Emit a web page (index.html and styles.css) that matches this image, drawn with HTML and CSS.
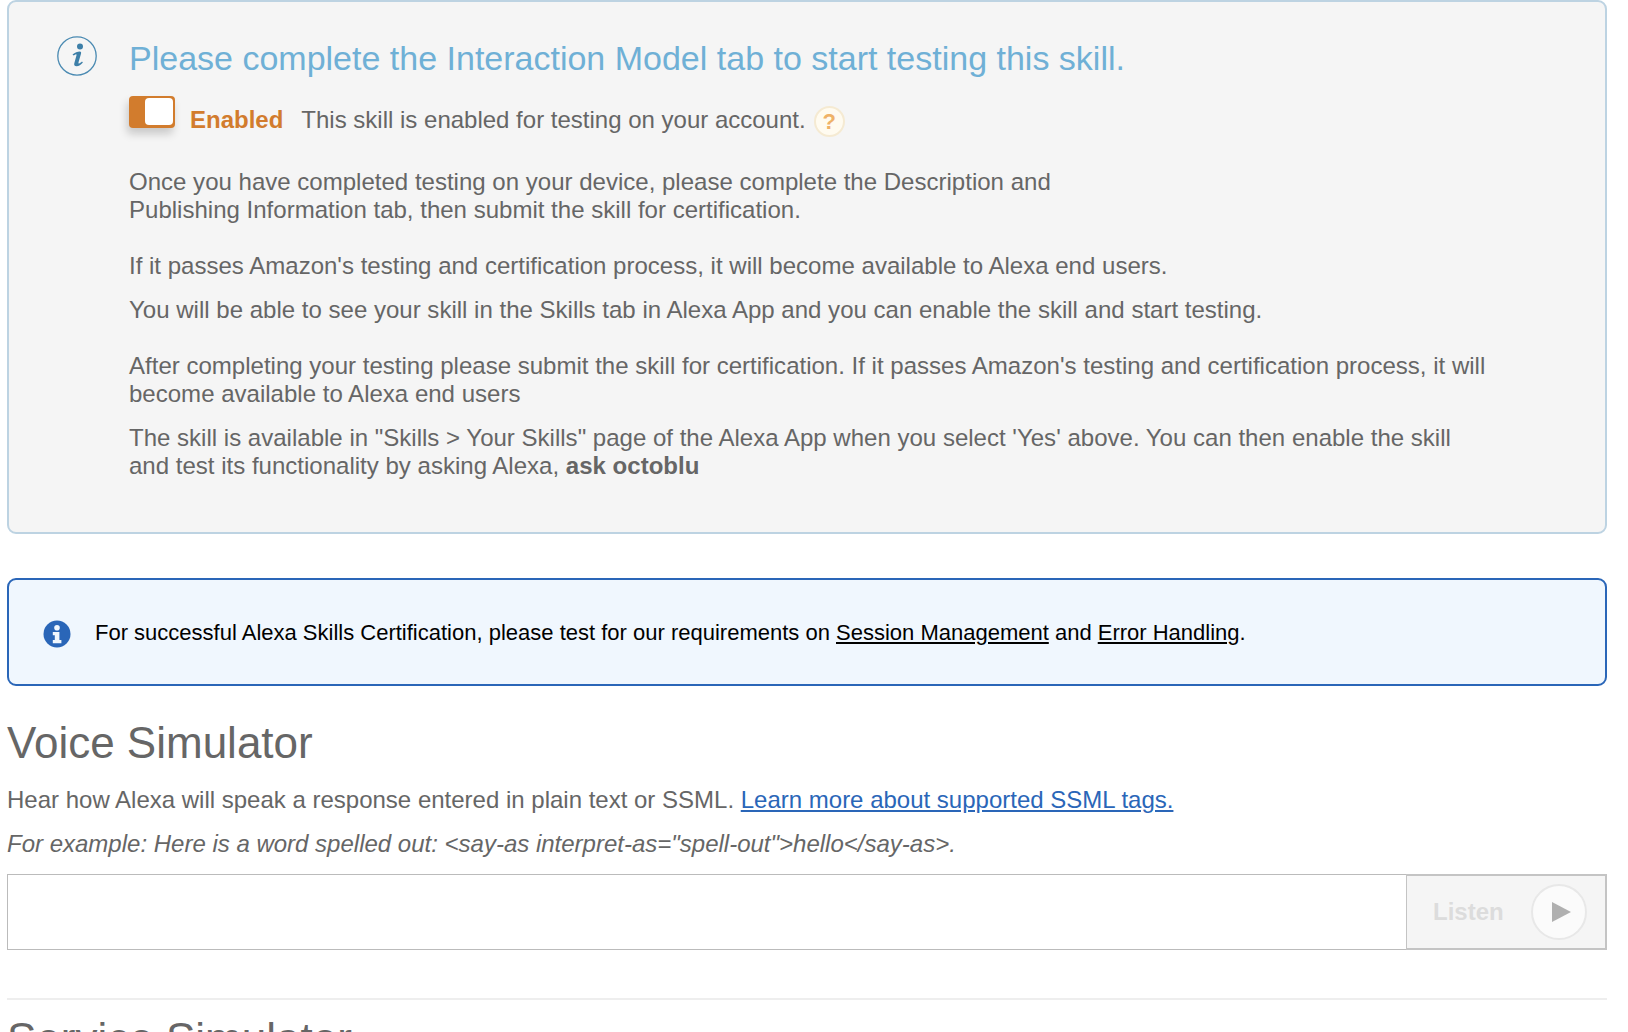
FILE: index.html
```html
<!DOCTYPE html>
<html lang="en">
<head>
<meta charset="utf-8">
<title>Test</title>
<link rel="stylesheet" href="styles.css">
</head>
<body>
<main class="page">
  <section class="panel">
    <svg class="info-icon" viewBox="0 0 40 40" width="40" height="40" aria-hidden="true">
      <circle cx="20" cy="20" r="19.2" fill="none" stroke="#4a8ab2" stroke-width="1.3"/>
      <circle cx="23" cy="10.500" r="3" fill="#3d7fa8"/>
      <path d="M15.500 18.500c2.500-2 5-3 7.300-3 1.200 0 1.500.9 1.200 2.200l-2.400 8.300c-.3 1-.1 1.500.5 1.500.7 0 1.800-.8 2.900-1.900l.9.9c-2 2.400-4 3.700-6.300 3.700-2 0-2.800-1-2.300-2.900l2.200-8c.2-.9-.2-1.200-1-.8l-1.900 1z" fill="#3d7fa8"/>
    </svg>
    <div class="panel-body">
      <h2 class="panel-title">Please complete the Interaction Model tab to start testing this skill.</h2>
      <div class="toggle-row">
        <span class="toggle"><span class="knob"></span></span>
        <strong class="enabled">Enabled</strong>
        <span class="toggle-note">This skill is enabled for testing on your account.</span>
        <span class="help">?</span>
      </div>
      <p class="para first">Once you have completed testing on your device, please complete the Description and<br>Publishing Information tab, then submit the skill for certification.</p>
      <p class="para gap-l">If it passes Amazon's testing and certification process, it will become available to Alexa end users.</p>
      <p class="para gap-s">You will be able to see your skill in the Skills tab in Alexa App and you can enable the skill and start testing.</p>
      <p class="para gap-l">After completing your testing please submit the skill for certification. If it passes Amazon's testing and certification process, it will become available to Alexa end users</p>
      <p class="para gap-s">The skill is available in "Skills &gt; Your Skills" page of the Alexa App when you select 'Yes' above. You can then enable the skill and test its functionality by asking Alexa, <b>ask octoblu</b></p>
    </div>
  </section>

  <section class="notice">
    <svg class="notice-icon" viewBox="0 0 28 28" width="28" height="28" aria-hidden="true">
      <circle cx="14" cy="14" r="13.500" fill="#2a66b8"/>
      <circle cx="14" cy="7.800" r="2.800" fill="#f0f7fe"/>
      <path d="M9.800 12h6.600v8h2v3.200H9.800V20h2v-4.800h-2z" fill="#f0f7fe"/>
    </svg>
    <p class="notice-text">For successful Alexa Skills Certification, please test for our requirements on <a href="#">Session Management</a> and <a href="#">Error Handling</a>.</p>
  </section>

  <h2 class="section-title">Voice Simulator</h2>
  <p class="lead">Hear how Alexa will speak a response entered in plain text or SSML. <a href="#">Learn more about supported SSML tags.</a></p>
  <p class="example">For example: Here is a word spelled out: &lt;say-as interpret-as="spell-out"&gt;hello&lt;/say-as&gt;.</p>

  <div class="sim">
    <div class="sim-input"></div>
    <div class="listen">
      <span class="listen-label">Listen</span>
      <span class="play"><span class="play-tri"></span></span>
    </div>
  </div>

  <hr class="rule">
  <h2 class="section-title next">Service Simulator</h2>
</main>
</body>
</html>
```

FILE: styles.css
```css
html, body {
  margin: 0;
  padding: 0;
  height: 1032px;
  overflow: hidden;
  background: #fff;
}
body {
  font-family: "Liberation Sans", Arial, sans-serif;
  color: #666;
  font-size: 24px;
  line-height: 28px;
}
.page {
  margin: 0 21px 0 7px;
}
p, h2 { margin: 0; font-weight: normal; }

.panel {
  display: flex;
  box-sizing: border-box;
  height: 534px;
  background: #f5f5f5;
  border: 2px solid #bdd3e2;
  border-radius: 9px;
  padding: 34px 0 0 48px;
}
.info-icon { flex: none; margin-right: 32px; }
.panel-body { width: 1360px; }
.panel-title {
  font-size: 34px;
  line-height: 44px;
  color: #6fb0d6;
}
.toggle-row {
  display: flex;
  align-items: center;
  margin-top: 22px;
  height: 36px;
}
.toggle {
  position: relative;
  flex: none;
  box-sizing: border-box;
  width: 46px;
  height: 32px;
  margin-top: -17px;
  background: #d27c2d;
  border-radius: 4px;
  box-shadow: -2px 6px 8px rgba(0, 0, 0, .18);
}
.knob {
  position: absolute;
  right: 2px;
  top: 2px;
  width: 28px;
  height: 27px;
  background: #fff;
  border-radius: 4px;
}
.enabled { margin-left: 15px; color: #d27c2d; }
.toggle-note { margin-left: 18px; }
.help {
  flex: none;
  box-sizing: border-box;
  width: 31px;
  height: 31px;
  margin: 3px 0 0 8px;
  background: #fffbf0;
  border: 2px solid #f5ead2;
  border-radius: 50%;
  color: #efb268;
  font-weight: bold;
  font-size: 22px;
  line-height: 27px;
  text-align: center;
}
.para { color: #666; font-size: 24.04px; }
.first { margin-top: 30px; }
.gap-l { margin-top: 28px; }
.gap-s { margin-top: 16px; }
.para b { font-weight: bold; }

.notice {
  display: flex;
  align-items: center;
  box-sizing: border-box;
  height: 108px;
  margin-top: 44px;
  background: #f0f7fe;
  border: 2px solid #2a66b8;
  border-radius: 9px;
  padding-left: 34px;
}
.notice-icon { flex: none; margin: 3px 24px 0 0; }
.notice-text { margin-top: 2px; color: #000; font-size: 22px; }
.notice-text a { color: #000; }

.section-title {
  font-size: 44px;
  line-height: 54px;
  color: #666;
  margin-top: 30px;
}
.lead { margin-top: 16px; }
.lead a { color: #2a66b8; }
.example { margin-top: 16px; font-style: italic; }

.sim {
  display: flex;
  height: 76px;
  margin-top: 16px;
}
.sim-input {
  flex: 1;
  box-sizing: border-box;
  background: #fff;
  border: 1px solid #bbb;
  border-right: 0;
}
.listen {
  display: flex;
  align-items: center;
  flex: none;
  box-sizing: border-box;
  width: 201px;
  background: #f5f5f5;
  border: 2px solid #c4c4c4;
  border-left-width: 1px;
  padding-left: 26px;
}
.listen-label {
  font-weight: bold;
  color: #dcdcdc;
}
.play {
  display: flex;
  align-items: center;
  justify-content: center;
  box-sizing: border-box;
  width: 56px;
  height: 56px;
  margin-left: 27px;
  background: #fbfbfb;
  border: 2px solid #e8e8e8;
  border-radius: 50%;
}
.play-tri {
  width: 0;
  height: 0;
  margin-left: 5px;
  border-left: 19px solid #b0b0b0;
  border-top: 10px solid transparent;
  border-bottom: 10px solid transparent;
}
.rule {
  height: 2px;
  margin: 48px 0 0;
  border: 0;
  background: #eee;
}
.next { margin-top: 12px; }
```
